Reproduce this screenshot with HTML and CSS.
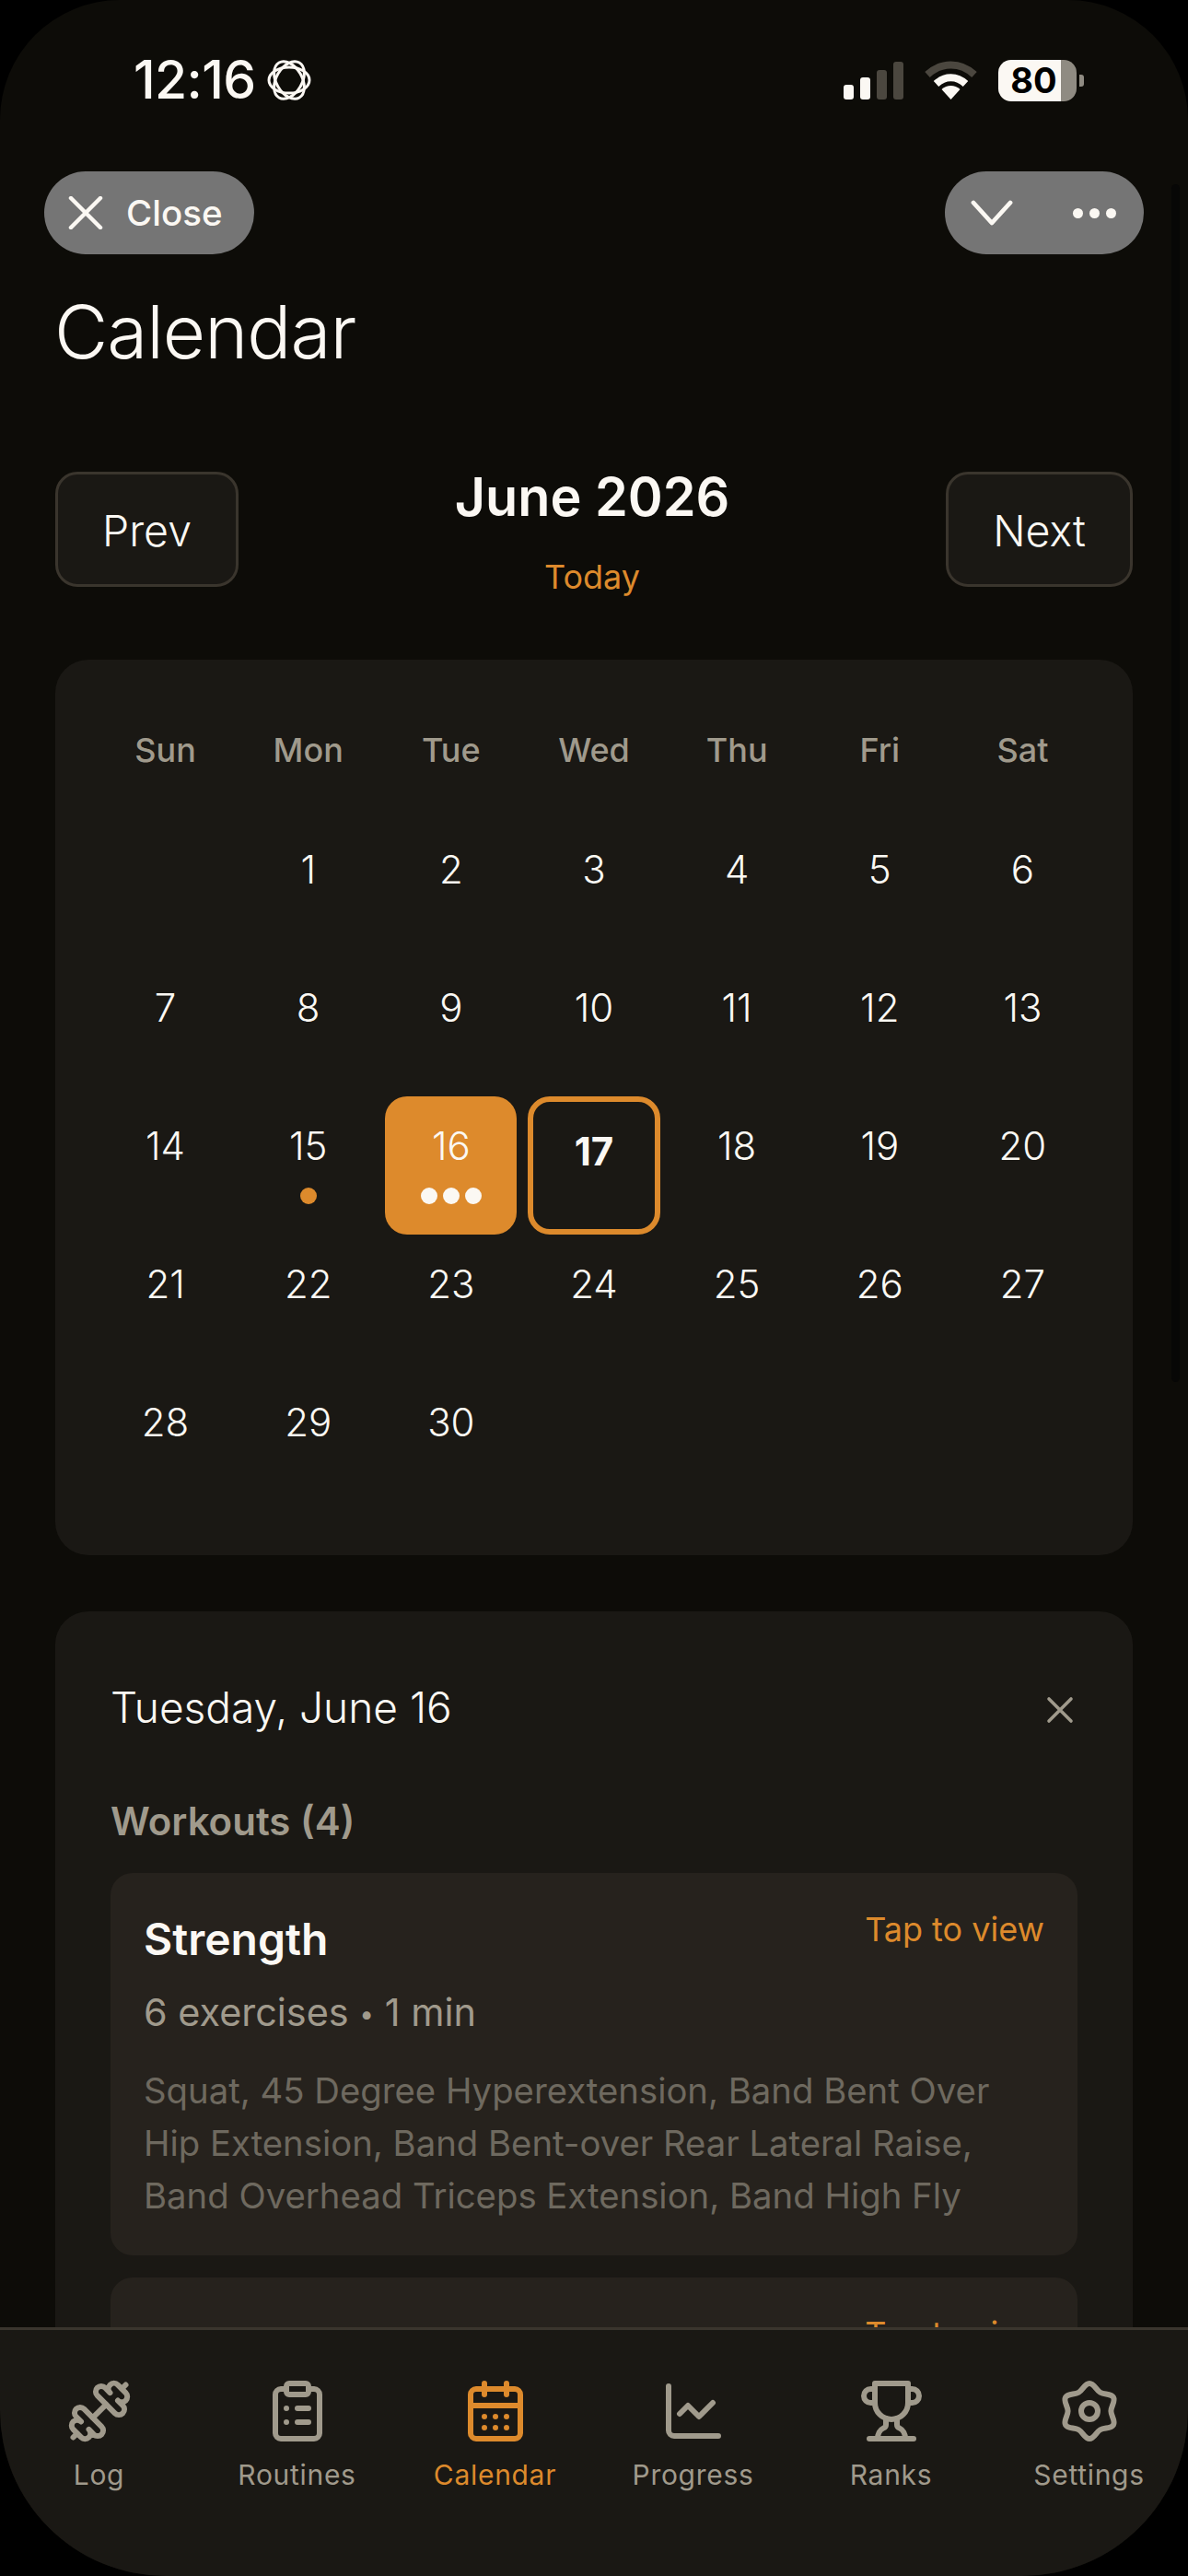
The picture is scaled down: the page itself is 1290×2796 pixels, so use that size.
FILE: index.html
```html
<!DOCTYPE html>
<html lang="en">
<head>
<meta charset="utf-8">
<title>Calendar</title>
<link rel="stylesheet" href="styles.css">
</head>
<body>
<div class="screen">
  <div class="scrollbar"></div>
  <main class="scroll">
    <header class="status">
      <div class="status-left">
        <span class="time">12:16</span>
        <svg class="focus" viewBox="0 0 48 48" fill="none" stroke="currentColor" stroke-width="3">
          <ellipse cx="24" cy="24" rx="22" ry="14"/>
          <ellipse cx="24" cy="24" rx="22" ry="14" transform="rotate(60 24 24)"/>
          <ellipse cx="24" cy="24" rx="22" ry="14" transform="rotate(120 24 24)"/>
        </svg>
      </div>
      <div class="status-right">
        <div class="signal">
          <span class="bar b1"></span><span class="bar b2"></span><span class="bar b3"></span><span class="bar b4"></span>
        </div>
        <svg class="wifi" viewBox="0 0 57 42" fill="none">
          <path d="M3 15 C18 1 39 1 54 15" stroke="#4b473f" stroke-width="8"/>
          <path d="M12.5 25 C22 16 35 16 44.5 25" stroke="#fbf8f3" stroke-width="8"/>
          <path d="M18.5 31 C24 25.5 33 25.5 38.5 31 L28.5 42 Z" fill="#fbf8f3"/>
        </svg>
        <div class="battery"><span class="battery-body">80</span><span class="battery-cap"></span></div>
      </div>
    </header>

    <nav class="nav">
      <div class="pill close-pill">
        <svg class="pill-x" viewBox="0 0 38 36" fill="none" stroke="currentColor" stroke-width="4.5" stroke-linecap="round"><path d="M3 2 35 34M35 2 3 34"/></svg>
        <span class="close-label">Close</span>
      </div>
      <div class="pill menu-pill">
        <svg class="chevron" viewBox="0 0 46 28" fill="none" stroke="currentColor" stroke-width="4.8" stroke-linecap="round" stroke-linejoin="round"><path d="M3 3 23 25 43 3"/></svg>
        <div class="more"><i></i><i></i><i></i></div>
      </div>
    </nav>

    <h1 class="title">Calendar</h1>

    <section class="month-row">
      <button class="month-btn">Prev</button>
      <div class="month-mid">
        <div class="month-name">June 2026</div>
        <div class="today-link">Today</div>
      </div>
      <button class="month-btn">Next</button>
    </section>

    <section class="card month-card">
      <div class="grid">
        <div class="wd">Sun</div><div class="wd">Mon</div><div class="wd">Tue</div><div class="wd">Wed</div><div class="wd">Thu</div><div class="wd">Fri</div><div class="wd">Sat</div>
        <div class="day"></div><div class="day">1</div><div class="day">2</div><div class="day">3</div><div class="day">4</div><div class="day">5</div><div class="day">6</div>
        <div class="day">7</div><div class="day">8</div><div class="day">9</div><div class="day">10</div><div class="day">11</div><div class="day">12</div><div class="day">13</div>
        <div class="day">14</div>
        <div class="day">15<div class="dots"><i></i></div></div>
        <div class="day selected">16<div class="dots"><i></i><i></i><i></i></div></div>
        <div class="day current">17</div>
        <div class="day">18</div><div class="day">19</div><div class="day">20</div>
        <div class="day">21</div><div class="day">22</div><div class="day">23</div><div class="day">24</div><div class="day">25</div><div class="day">26</div><div class="day">27</div>
        <div class="day">28</div><div class="day">29</div><div class="day">30</div>
      </div>
    </section>

    <section class="card detail-card">
      <div class="detail-head">
        <h2 class="detail-date">Tuesday, June 16</h2>
        <svg class="detail-x" viewBox="0 0 30 30" fill="none" stroke="currentColor" stroke-width="3.6" stroke-linecap="round"><path d="M3 3 27 27M27 3 3 27"/></svg>
      </div>
      <h3 class="detail-label">Workouts (4)</h3>
      <article class="workout">
        <div class="workout-head"><span class="workout-name">Strength</span><span class="workout-link">Tap to view</span></div>
        <p class="workout-meta">6 exercises <span class="sep">•</span> 1 min</p>
        <p class="workout-list">Squat, 45 Degree Hyperextension, Band Bent Over Hip Extension, Band Bent-over Rear Lateral Raise, Band Overhead Triceps Extension, Band High Fly</p>
      </article>
      <article class="workout">
        <div class="workout-head"><span class="workout-name">Strength</span><span class="workout-link">Tap to view</span></div>
      </article>
    </section>
  </main>

  <footer class="tabs">
    <div class="tab">
      <svg class="tab-icon" viewBox="0 0 24 24"><g transform="matrix(-1 0 0 1 24 0)"><path d="M14.4 14.4 9.6 9.6"/><path d="M18.657 21.485a2 2 0 1 1-2.829-2.828l-1.767 1.768a2 2 0 1 1-2.829-2.829l6.364-6.364a2 2 0 1 1 2.829 2.829l-1.768 1.767a2 2 0 1 1 2.828 2.829z"/><path d="m21.5 21.5-1.4-1.4"/><path d="M3.9 3.9 2.5 2.5"/><path d="M6.404 12.768a2 2 0 1 1-2.829-2.829l1.768-1.767a2 2 0 1 1-2.828-2.829l2.828-2.828a2 2 0 1 1 2.829 2.828l1.767-1.768a2 2 0 1 1 2.829 2.829z"/></g></svg>
      <span>Log</span>
    </div>
    <div class="tab">
      <svg class="tab-icon" viewBox="0 0 24 24"><rect width="8" height="4" x="8" y="2" rx="1" ry="1"/><path d="M16 4h2a2 2 0 0 1 2 2v14a2 2 0 0 1-2 2H6a2 2 0 0 1-2-2V6a2 2 0 0 1 2-2h2"/><path d="M12 11h4"/><path d="M12 16h4"/><path d="M8 11h.01"/><path d="M8 16h.01"/></svg>
      <span>Routines</span>
    </div>
    <div class="tab active">
      <svg class="tab-icon" viewBox="0 0 24 24"><path d="M8 2v4"/><path d="M16 2v4"/><rect width="18" height="18" x="3" y="4" rx="2"/><path d="M3 10h18"/><path d="M8 14h.01"/><path d="M12 14h.01"/><path d="M16 14h.01"/><path d="M8 18h.01"/><path d="M12 18h.01"/><path d="M16 18h.01"/></svg>
      <span>Calendar</span>
    </div>
    <div class="tab">
      <svg class="tab-icon" viewBox="0 0 24 24"><path d="M3 3v16a2 2 0 0 0 2 2h16"/><path d="m19 9-5 5-4-4-3 3"/></svg>
      <span>Progress</span>
    </div>
    <div class="tab">
      <svg class="tab-icon" viewBox="0 0 24 24"><path d="M6 9H4.5a2.5 2.5 0 0 1 0-5H6"/><path d="M18 9h1.5a2.5 2.5 0 0 0 0-5H18"/><path d="M4 22h16"/><path d="M10 14.66V17c0 .55-.47.98-.97 1.21C7.85 18.75 7 20.24 7 22"/><path d="M14 14.66V17c0 .55.47.98.97 1.21C16.15 18.75 17 20.24 17 22"/><path d="M18 2H6v7a6 6 0 0 0 12 0V2Z"/></svg>
      <span>Ranks</span>
    </div>
    <div class="tab">
      <svg class="tab-icon" viewBox="0 0 24 24"><path d="M12 2C13.7 2 14.43 4.4 15.9 5.25C17.37 6.1 19.81 5.53 20.66 7C21.51 8.47 19.8 10.3 19.8 12C19.8 13.7 21.51 15.53 20.66 17C19.81 18.47 17.37 17.9 15.9 18.75C14.43 19.6 13.7 22 12 22C10.3 22 9.57 19.6 8.1 18.75C6.63 17.9 4.19 18.47 3.34 17C2.49 15.53 4.2 13.7 4.2 12C4.2 10.3 2.49 8.47 3.34 7C4.19 5.53 6.63 6.1 8.1 5.25C9.57 4.4 10.3 2 12 2Z"/><circle cx="12" cy="12" r="3"/></svg>
      <span>Settings</span>
    </div>
  </footer>
</div>
</body>
</html>
```

FILE: styles.css
```css
* { box-sizing: border-box; }
html, body { margin: 0; padding: 0; background: #000; }
body { width: 1290px; height: 2796px; overflow: hidden; font-family: Inter, "Liberation Sans", sans-serif; color: #fbf8f3; }
h1, h2, h3, p { margin: 0; font-weight: 400; }

.screen { position: relative; width: 1290px; height: 2796px; display: flex; flex-direction: column; background: #0d0c08; border-radius: 130px 130px 180px 180px; overflow: hidden; }
.scrollbar { position: absolute; left: 1272px; top: 200px; width: 9px; height: 1300px; border-radius: 5px; background: #070706; }
.scroll { flex: 1; min-height: 0; overflow: hidden; position: relative; }

.status { height: 186px; padding: 63px 113px 0 145px; display: flex; justify-content: space-between; align-items: flex-start; }
.status-left { display: flex; align-items: center; gap: 12px; height: 48px; }
.time { font-size: 57px; font-weight: 500; line-height: 48px; letter-spacing: -0.6px; }
.focus { width: 48px; height: 48px; }
.status-right { display: flex; align-items: center; gap: 23px; height: 46px; margin-top: 1px; }
.signal { display: flex; align-items: flex-end; gap: 7px; height: 41px; }
.bar { width: 11px; border-radius: 3px; background: #fbf8f3; }
.b1 { height: 16px; }
.b2 { height: 24px; }
.b3 { height: 32px; background: #4b473f; }
.b4 { height: 41px; background: #4b473f; }
.wifi { width: 57px; height: 42px; }
.battery { display: flex; align-items: center; gap: 3px; }
.battery-body { width: 85px; height: 45px; border-radius: 14px; background: linear-gradient(90deg, #fbf8f3 80%, #8f8b82 80%); color: #000; font-size: 38px; font-weight: 700; line-height: 45px; text-align: center; padding-right: 8px; }
.battery-cap { width: 5px; height: 13px; border-radius: 0 3px 3px 0; background: #8f8b82; }

.nav { display: flex; justify-content: space-between; padding: 0 48px; }
.pill { height: 90px; border-radius: 45px; background: #757575; display: flex; align-items: center; }
.close-pill { width: 228px; padding-left: 26px; gap: 25px; }
.pill-x { width: 38px; height: 36px; }
.close-label { font-size: 38.5px; font-weight: 500; line-height: 44px; }
.menu-pill { width: 216px; padding-left: 28px; gap: 65px; }
.chevron { width: 46px; height: 28px; }
.more { display: flex; gap: 7px; }
.more i { width: 11px; height: 11px; border-radius: 50%; background: #fbf8f3; }

.title { font-size: 80px; font-weight: 350; line-height: 96px; padding: 36px 60px 0 59px; letter-spacing: -1px; }
.month-row { display: flex; justify-content: space-between; align-items: flex-start; padding: 0 60px; margin-top: 104px; }
.month-btn { width: 199px; height: 125px; border: 3px solid #3a352d; border-radius: 24px; background: #1a1814; color: #fbf8f3; font: 350 46.5px Inter, sans-serif; padding: 3px 0 0; }
.month-btn:last-child { width: 203px; }
.month-mid { display: flex; flex-direction: column; align-items: center; }
.month-name { font-size: 57.5px; font-weight: 600; line-height: 54px; }
.today-link { font-size: 36px; line-height: 24px; margin-top: 48px; color: #dd8a2c; }

.card { background: #1a1814; border-radius: 36px; margin: 0 60px; padding: 48px; }
.month-card { margin-top: 78px; height: 972px; }
.grid { display: grid; grid-template-columns: repeat(7, 1fr); column-gap: 12px; grid-auto-rows: 150px; grid-template-rows: 126px; }
.wd { text-align: center; font-size: 36px; font-weight: 500; line-height: 44px; padding-top: 28px; color: #a09a8c; }
.day { text-align: center; font-size: 42px; font-weight: 350; line-height: 54px; padding-top: 27px; border-radius: 24px; }
.dots { display: flex; justify-content: center; gap: 6px; margin-top: 18px; }
.dots i { width: 18px; height: 18px; border-radius: 50%; background: #dd8a2c; }
.selected { background: #dd8a2c; }
.selected .dots i { background: #fbf8f3; }
.current { border: 6px solid #dd8a2c; font-weight: 700; }

.detail-card { margin-top: 61px; padding: 60px; padding-top: 77px; }
.detail-head { display: flex; justify-content: space-between; align-items: center; padding-right: 4px; }
.detail-date { font-size: 46px; font-weight: 350; line-height: 54px; }
.detail-x { width: 30px; height: 30px; margin-top: 6px; color: #a09a8c; }
.detail-label { font-size: 42px; font-weight: 600; line-height: 48px; margin-top: 73px; color: #a09a8c; }
.workout { background: #26221d; border-radius: 24px; padding: 36px; margin-bottom: 24px; }
.detail-label + .workout { margin-top: 32px; }
.workout-head { display: flex; justify-content: space-between; align-items: flex-start; }
.workout-name { font-size: 48px; font-weight: 600; line-height: 72px; }
.workout-link { font-size: 36px; line-height: 50px; color: #dd8a2c; }
.workout-meta { font-size: 41.4px; line-height: 48px; margin-top: 19px; color: #a09a8c; }
.sep { font-size: 28px; vertical-align: 3px; }
.workout-list { font-size: 38.3px; line-height: 57px; margin-top: 31px; color: #6e695f; }

.tabs { flex: none; height: 270px; background: #1a1814; border-top: 3px solid #3a352d; display: grid; grid-template-columns: repeat(6, 1fr); padding-top: 52px; }
.tab { display: flex; flex-direction: column; align-items: center; font-size: 30px; font-weight: 400; letter-spacing: 0.7px; line-height: 40px; color: #a09a8c; }
.tab.active { color: #dd8a2c; }
.tab-icon { width: 72px; height: 72px; fill: none; stroke: currentColor; stroke-width: 2; stroke-linecap: round; stroke-linejoin: round; margin-bottom: 13px; }
```
